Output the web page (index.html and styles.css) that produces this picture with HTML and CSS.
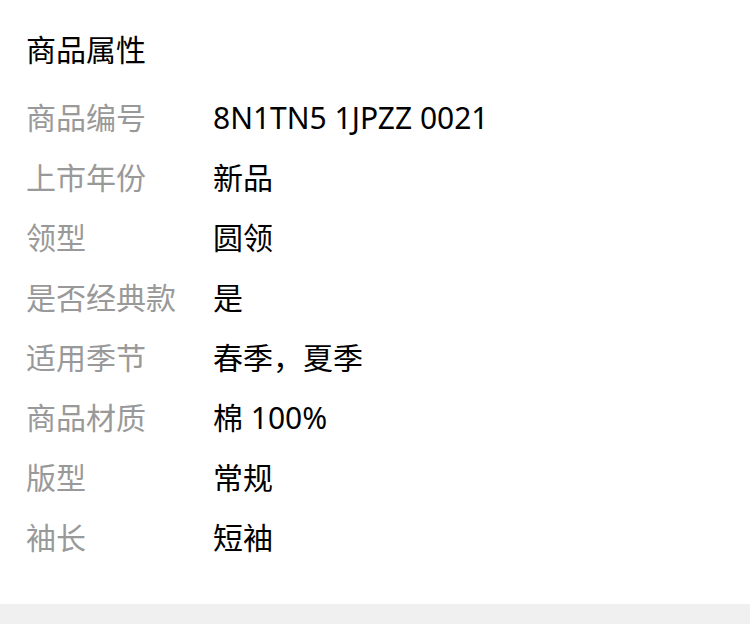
FILE: index.html
```html
<!DOCTYPE html>
<html lang="zh-CN">
<head>
  <meta charset="UTF-8" />
  <meta name="viewport" content="width=device-width, initial-scale=1.0"/>
  <title>商品属性</title>
  <link rel="stylesheet" href="styles.css">
</head>
<body>
  <section class="attrs">
    <h2 class="attrs-title">商品属性</h2>
    <ul class="attr-list">
      <li class="attr-row"><span class="attr-label">商品编号</span><span class="attr-value">8N1TN5 1JPZZ 0021</span></li>
      <li class="attr-row"><span class="attr-label">上市年份</span><span class="attr-value">新品</span></li>
      <li class="attr-row"><span class="attr-label">领型</span><span class="attr-value">圆领</span></li>
      <li class="attr-row"><span class="attr-label">是否经典款</span><span class="attr-value">是</span></li>
      <li class="attr-row"><span class="attr-label">适用季节</span><span class="attr-value">春季，夏季</span></li>
      <li class="attr-row"><span class="attr-label">商品材质</span><span class="attr-value">棉 100%</span></li>
      <li class="attr-row"><span class="attr-label">版型</span><span class="attr-value">常规</span></li>
      <li class="attr-row"><span class="attr-label">袖长</span><span class="attr-value">短袖</span></li>
    </ul>
  </section>
  <div class="gap-band"></div>
</body>
</html>
```

FILE: styles.css
```css
* {
  margin: 0;
  padding: 0;
  box-sizing: border-box;
}
body {
  background-color: #fff;
  font-family: "Noto Sans", "Noto Sans CJK SC", sans-serif;
  color: #000;
}
.attrs {
  padding: 30px 26px 36px;
}
.attrs-title {
  font-size: 30px;
  font-weight: normal;
  line-height: 40px;
  margin-bottom: 18px;
}
.attr-list {
  list-style: none;
}
.attr-row {
  display: flex;
  height: 60px;
  align-items: center;
  font-size: 30px;
  line-height: 40px;
}
.attr-label {
  width: 187px;
  color: #999;
}
.attr-value {
  color: #000;
}
.gap-band {
  height: 20px;
  background-color: #f0f0f0;
}
```
